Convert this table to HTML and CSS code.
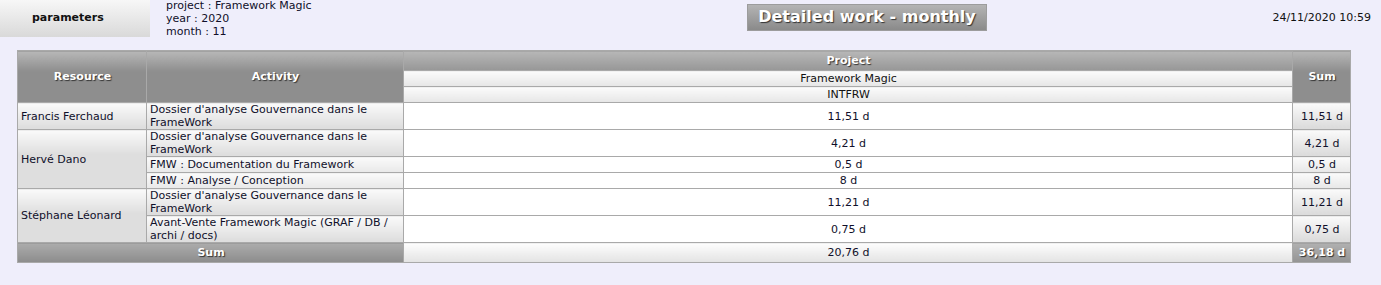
FILE: index.html
```html
<!DOCTYPE html>
<html>
<head>
<meta charset="utf-8">
<link rel="stylesheet" href="styles.css">
</head>
<body>
<div class="top">
  <div class="params-btn">parameters</div>
  <div class="params">project : Framework Magic<br>year : 2020<br>month : 11</div>
  <div class="title">Detailed work - monthly</div>
  <div class="spacer"></div>
  <div class="date">24/11/2020 10:59</div>
</div>
<table class="grid">
  <colgroup>
    <col class="c-res"><col class="c-act"><col class="c-proj"><col class="c-sum">
  </colgroup>
  <thead>
    <tr>
      <th rowspan="3" class="hd big">Resource</th>
      <th rowspan="3" class="hd big">Activity</th>
      <th class="hd top1">Project</th>
      <th rowspan="3" class="hd big">Sum</th>
    </tr>
    <tr><th class="sub">Framework Magic</th></tr>
    <tr><th class="sub">INTFRW</th></tr>
  </thead>
  <tbody>
    <tr>
      <td class="res">Francis Ferchaud</td>
      <td class="act">Dossier d'analyse Gouvernance dans le FrameWork</td>
      <td class="val">11,51 d</td>
      <td class="sum">11,51 d</td>
    </tr>
    <tr>
      <td class="res" rowspan="3">Hervé Dano</td>
      <td class="act">Dossier d'analyse Gouvernance dans le FrameWork</td>
      <td class="val">4,21 d</td>
      <td class="sum">4,21 d</td>
    </tr>
    <tr>
      <td class="act">FMW : Documentation du Framework</td>
      <td class="val">0,5 d</td>
      <td class="sum">0,5 d</td>
    </tr>
    <tr>
      <td class="act">FMW : Analyse / Conception</td>
      <td class="val">8 d</td>
      <td class="sum">8 d</td>
    </tr>
    <tr>
      <td class="res" rowspan="2">Stéphane Léonard</td>
      <td class="act">Dossier d'analyse Gouvernance dans le FrameWork</td>
      <td class="val">11,21 d</td>
      <td class="sum">11,21 d</td>
    </tr>
    <tr>
      <td class="act">Avant-Vente Framework Magic (GRAF / DB / archi / docs)</td>
      <td class="val">0,75 d</td>
      <td class="sum">0,75 d</td>
    </tr>
  </tbody>
  <tfoot>
    <tr>
      <td colspan="2" class="ft-label">Sum</td>
      <td class="ft-val">20,76 d</td>
      <td class="ft-total">36,18 d</td>
    </tr>
  </tfoot>
</table>
</body>
</html>
```
FILE: styles.css
```css
html, body {
  margin: 0;
  padding: 0;
  background: #efeefb;
  font-family: "DejaVu Sans", "Noto Sans", sans-serif;
  font-size: 11px;
  color: #10102a;
}

.top {
  display: flex;
  align-items: flex-start;
  height: 50px;
}

.params-btn {
  width: 118px;
  height: 37px;
  line-height: 36px;
  padding-left: 32px;
  font-weight: bold;
  background: linear-gradient(#f7f7f7, #d9d9d9);
  color: #111;
}

.params {
  width: 581px;
  padding-left: 16px;
  line-height: 13px;
  margin-top: -1px;
}

.title {
  box-sizing: border-box;
  width: 240px;
  height: 27px;
  margin-top: 4px;
  border: 1px solid #9c9c9c;
  background: linear-gradient(#b4b4b4, #8a8a8a);
  color: #fff;
  font-weight: bold;
  font-size: 16px;
  line-height: 24px;
  text-align: center;
  text-shadow: 1px 1px 1px #333;
}

.spacer { flex: 1; }

.date {
  margin-top: 11px;
  padding-right: 10px;
  color: #111;
}

.grid {
  margin-left: 17px;
  width: 1333px;
  border-collapse: collapse;
  table-layout: fixed;
  border: 1px solid #a6a6a6;
}

.c-res { width: 129px; }
.c-act { width: 257px; }
.c-proj { width: 889px; }
.c-sum { width: 58px; }

.grid th, .grid td {
  border: 1px solid #a9a9a9;
  padding: 0 2px 0 3px;
  line-height: 13px;
  height: 15px;
  vertical-align: middle;
}

.grid .hd {
  color: #fff;
  font-weight: bold;
  text-shadow: 1px 1px 1px #333;
  text-align: center;
}

.grid .big {
  background: linear-gradient(#b7b7b7, #8e8e8e 20px, #8e8e8e);
}

.grid .top1 {
  height: 19px;
  background: linear-gradient(#b7b7b7, #979797);
}

.grid .sub {
  font-weight: normal;
  color: #111;
  text-align: center;
  background: linear-gradient(#fbfbfb, #e6e6e6);
}

.grid .res, .grid .act {
  background: linear-gradient(#fafafa, #dedede 24px, #dedede);
  text-align: left;
}

.grid .val {
  background: #fff;
  text-align: center;
}

.grid .sum {
  background: linear-gradient(#fafafa, #dcdcdc 24px, #dcdcdc);
  text-align: center;
}

.grid .ft-label {
  height: 19px;
  background: linear-gradient(#acacac, #8c8c8c);
  color: #fff;
  font-weight: bold;
  text-align: center;
  text-shadow: 1px 1px 1px #333;
}

.grid .ft-val {
  background: linear-gradient(#fdfdfd, #e3e3e3);
  text-align: center;
}

.grid .ft-total {
  background: linear-gradient(#b0b0b0, #949494);
  color: #fff;
  font-weight: bold;
  text-align: center;
  text-shadow: 1px 1px 1px #333;
}
```
